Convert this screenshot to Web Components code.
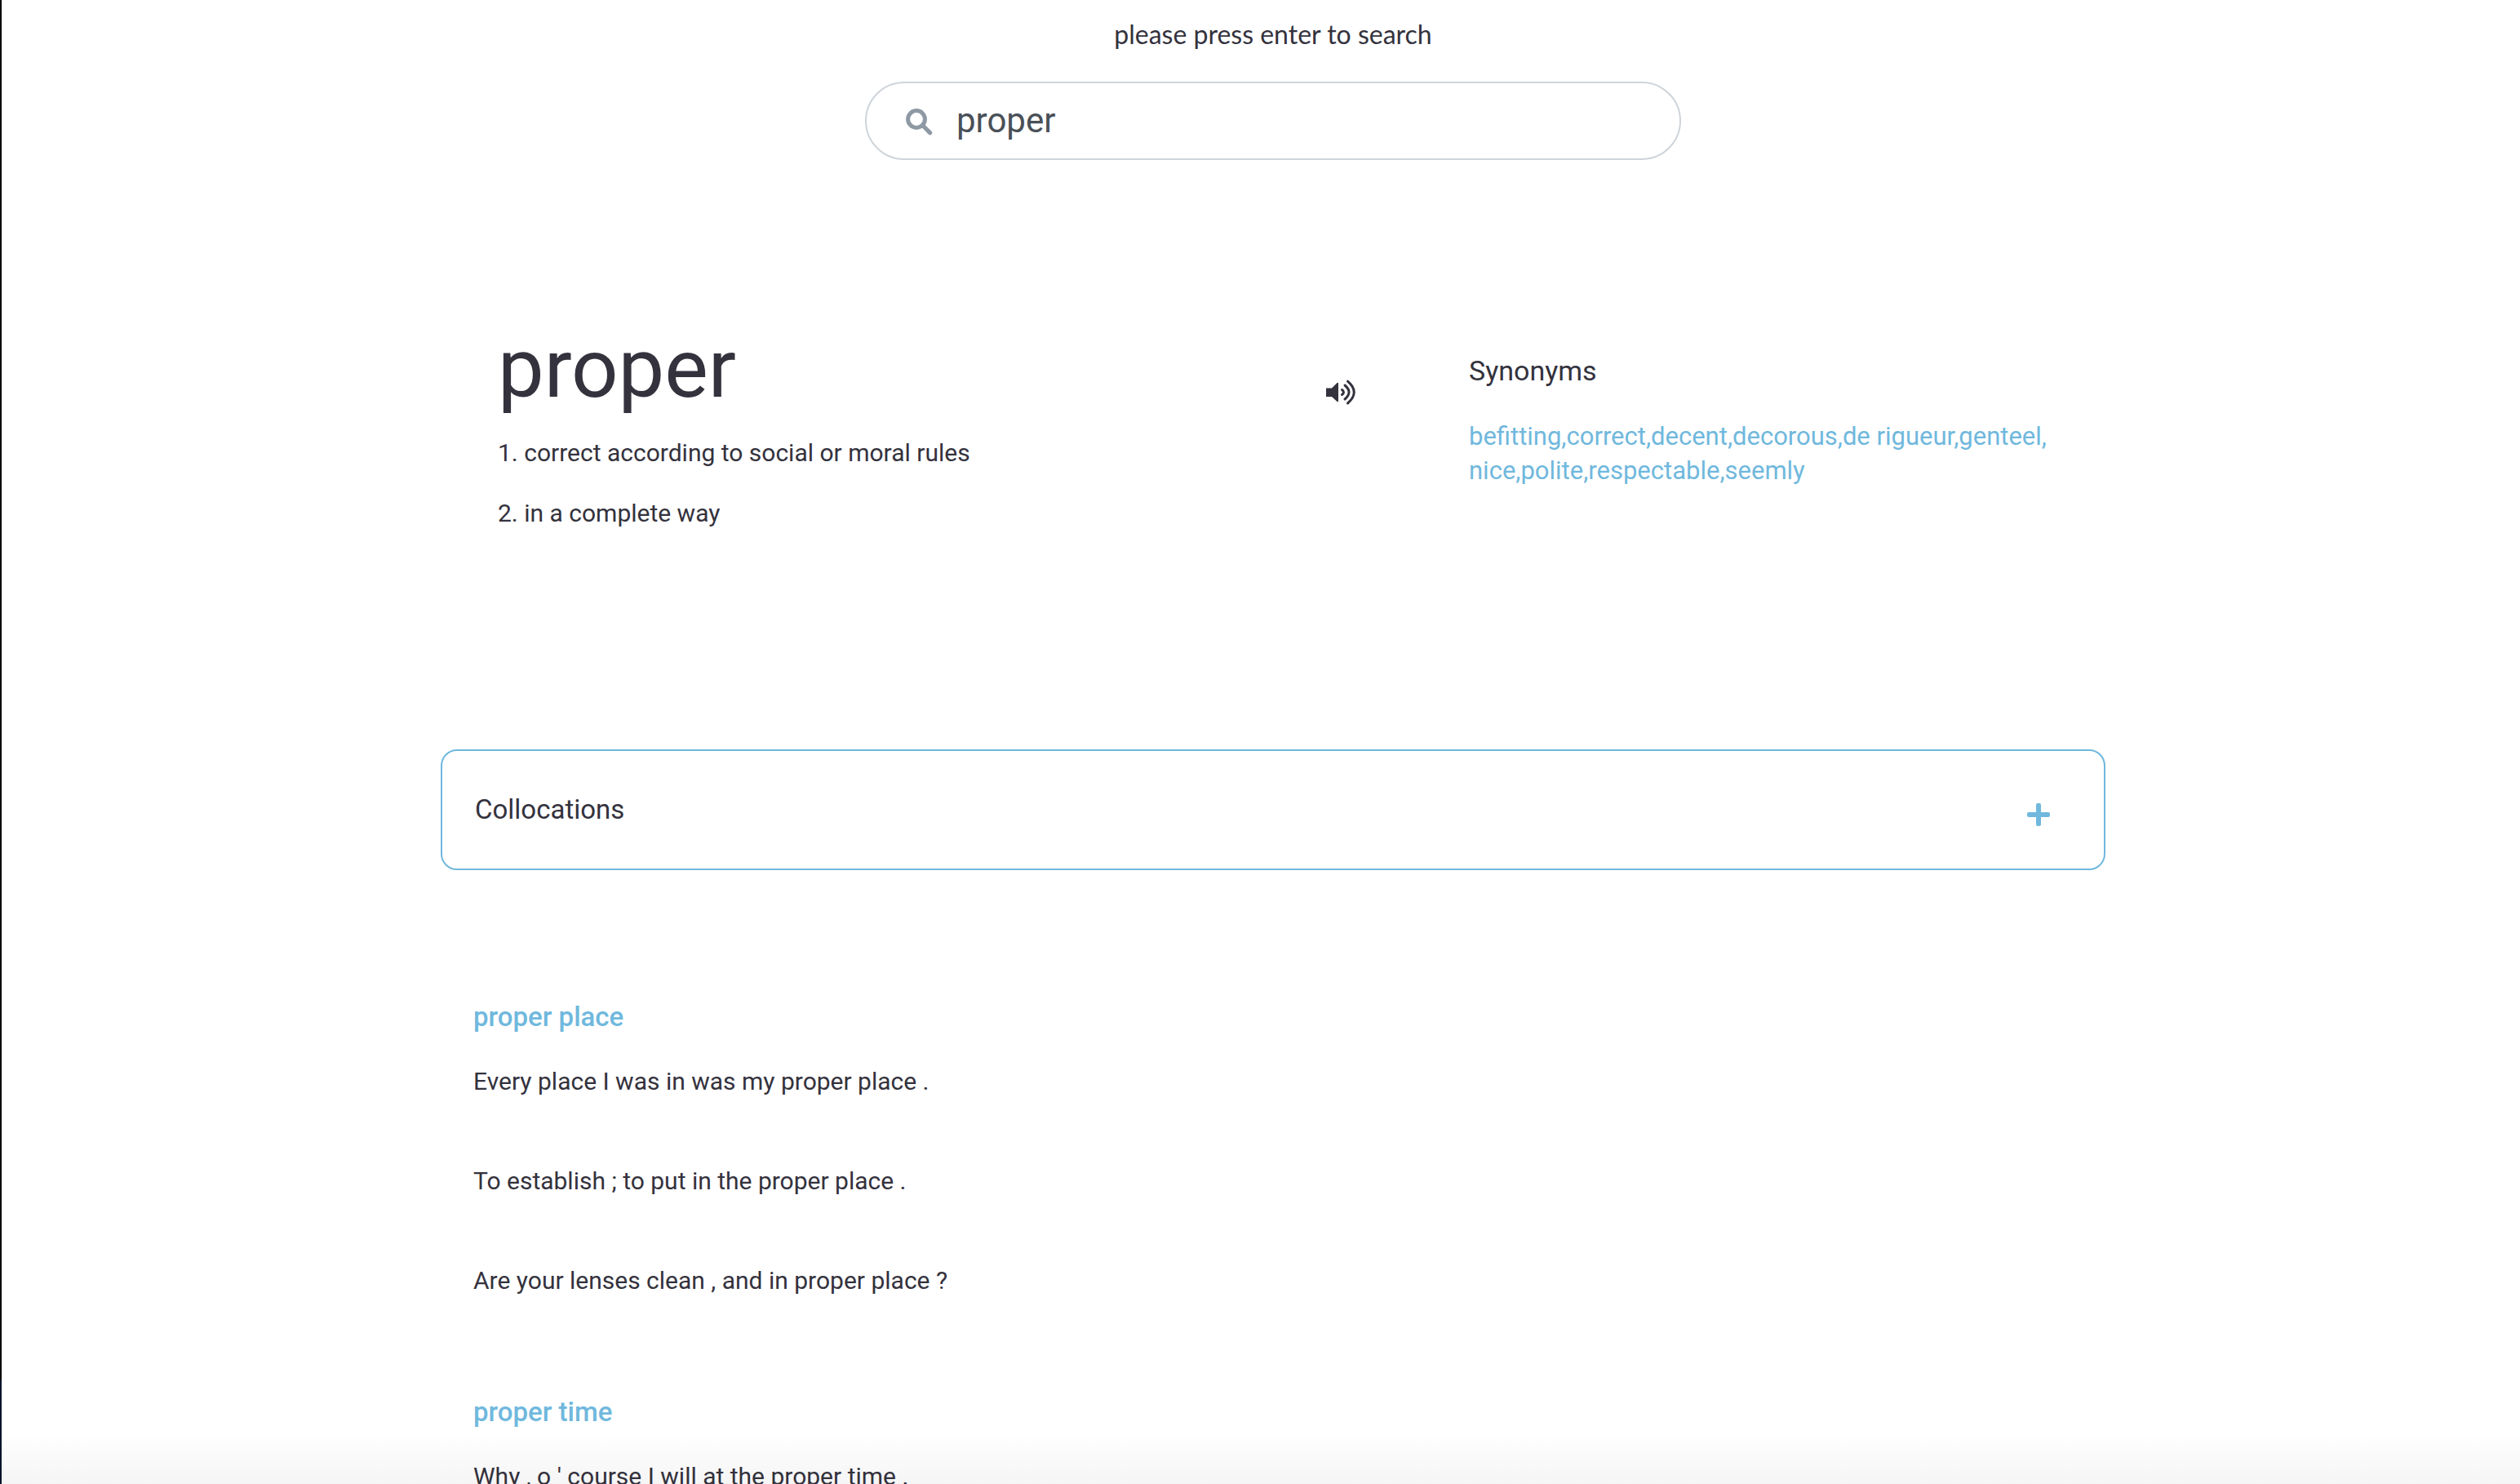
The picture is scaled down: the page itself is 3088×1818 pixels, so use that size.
<!DOCTYPE html>
<html lang="en">
<head>
<meta charset="utf-8">
<meta name="viewport" content="width=device-width, initial-scale=1">
<title>proper</title>
<style>
:root{--ink:#34323d;--blue:#70b8dd;--line:#ced4da;--muted:#8e99a4;--body:30px;--head:33px}
body{margin:0;font-family:Roboto,"Liberation Sans",sans-serif;color:var(--ink);background:#fff;overflow:hidden}
</style>
</head>
<body>
<dictionary-page></dictionary-page>
<script>
const define = (name, html, setup) => customElements.define(name, class extends HTMLElement {
  constructor() {
    super();
    this.attachShadow({mode: 'open'}).innerHTML = html;
  }
  connectedCallback() { if (setup) setup(this, this.shadowRoot); }
});

define('search-box', `
<style>
:host{display:flex;flex-direction:column;align-items:center;gap:36px}
label{font:32px/44px Lato,"Noto Sans",sans-serif}
.field{box-sizing:border-box;width:100%;max-width:1000px;height:96px;border:2px solid var(--line);border-radius:48px;display:flex;align-items:center;gap:28px;padding:0 48px}
svg{width:34px;height:34px;flex:none;margin-top:4px}
input{flex:1;min-width:0;border:0;outline:0;padding:0;background:none;color:#495057;font:42px/48px Roboto,sans-serif}
</style>
<label for="q">please press enter to search</label>
<div class="field">
<svg viewBox="0 0 34 34" fill="none" stroke="#8e99a4"><circle cx="13" cy="13" r="10.4" stroke-width="5"/><path d="M20 20 29.800 29.800" stroke-width="5.2" stroke-linecap="butt"/><path d="M28 28 29.800 29.800" stroke-width="5" stroke-linecap="round"/></svg>
<input id="q" type="text" value="proper" autocomplete="off">
</div>`);

define('word-entry', `
<style>
:host{display:grid;grid-template-columns:1fr auto 740px;align-items:start}
h1{margin:0;font-size:101px;line-height:120px;font-weight:400}
ol{margin:0;padding:0;list-style:none;font-size:var(--body);line-height:42px;display:grid;gap:32px}
.main{display:grid;gap:22px}
button{margin:72px 138px 0 0;padding:0;border:0;background:none;color:inherit;display:block}
svg{display:block;width:38px;height:34px}
</style>
<div class="main"><h1><slot name="word"></slot></h1>
<ol><li>1. correct according to social or moral rules</li><li>2. in a complete way</li></ol></div>
<button type="button" aria-label="Play pronunciation"><svg viewBox="0 0 38 34" fill="none" stroke="currentColor" stroke-width="3" stroke-linecap="round"><path d="M1 11.500H8L14.500 5Q16 4 16 6V27Q16 29 14.500 28L8 22H1Z" fill="currentColor" stroke="none"/><path d="M20.500 13.500Q24.500 16.500 20.500 19.500M24 8Q34 16.500 24 25M27.500 3.200Q43 16.500 27.500 30"/></svg></button>
<synonym-list></synonym-list>`);

define('synonym-list', `
<style>
:host{display:block;padding-top:40px}
h2{margin:0 0 38px;font-size:34px;line-height:44px;font-weight:400}
p{margin:0;font-size:31px;line-height:42px}
a{color:var(--blue);text-decoration:none}
</style>
<h2>Synonyms</h2><p></p>`, (host, root) => {
  const words = ['befitting','correct','decent','decorous','de rigueur','genteel','nice','polite','respectable','seemly'];
  root.querySelector('p').innerHTML = words.map((w, i) => `<a href="#">${w}${i < words.length - 1 ? ',' : ''}</a>`).join('<wbr>');
});

define('collapse-card', `
<style>
:host{display:block}
button{box-sizing:border-box;width:100%;height:148px;border:2px solid var(--blue);border-radius:20px;background:none;color:inherit;font:var(--head)/44px Roboto,sans-serif;display:flex;align-items:center;justify-content:space-between;padding:0 66px 0 40px;text-align:left}
svg{width:28px;height:28px;margin-top:12px}
</style>
<button type="button"><slot></slot><svg viewBox="0 0 28 28" fill="#70b8dd"><rect y="11" width="28" height="6" rx="2"/><rect x="11" width="6" height="28" rx="2"/></svg></button>`);

define('example-group', `
<style>
:host{display:block;padding:0 40px}
h3{margin:0 0 36px;font-size:var(--head);line-height:44px;font-weight:500;color:var(--blue)}
.list{display:grid;gap:80px;font-size:var(--body);line-height:42px}
::slotted(p){margin:0}
</style>
<h3><slot name="title"></slot></h3><div class="list"><slot></slot></div>`);

define('dictionary-page', `
<style>
:host{display:block;position:relative;height:100vh;overflow:hidden;box-sizing:border-box;padding:20px 0 0 32px}
:host::before{content:"";position:absolute;inset:0 auto 0 0;width:2px;background:linear-gradient(#000 93%,#04142c 93%)}
:host::after{content:"";position:absolute;inset:auto 0 0 2px;height:64px;background:linear-gradient(transparent,rgba(0,0,0,.04));pointer-events:none}
main{max-width:2040px;margin:0 auto}
word-entry{margin:196px 0 268px;padding:0 40px 0 70px}
.examples{display:grid;gap:118px;padding-top:158px}
</style>
<main>
<search-box></search-box>
<word-entry><span slot="word">proper</span></word-entry>
<collapse-card>Collocations</collapse-card>
<div class="examples">
<example-group><span slot="title">proper place</span><p>Every place I was in was my proper place .</p><p>To establish ; to put in the proper place .</p><p>Are your lenses clean , and in proper place ?</p></example-group>
<example-group><span slot="title">proper time</span><p>Why , o ' course I will at the proper time .</p></example-group>
</div>
</main>`);
</script>
</body>
</html>
